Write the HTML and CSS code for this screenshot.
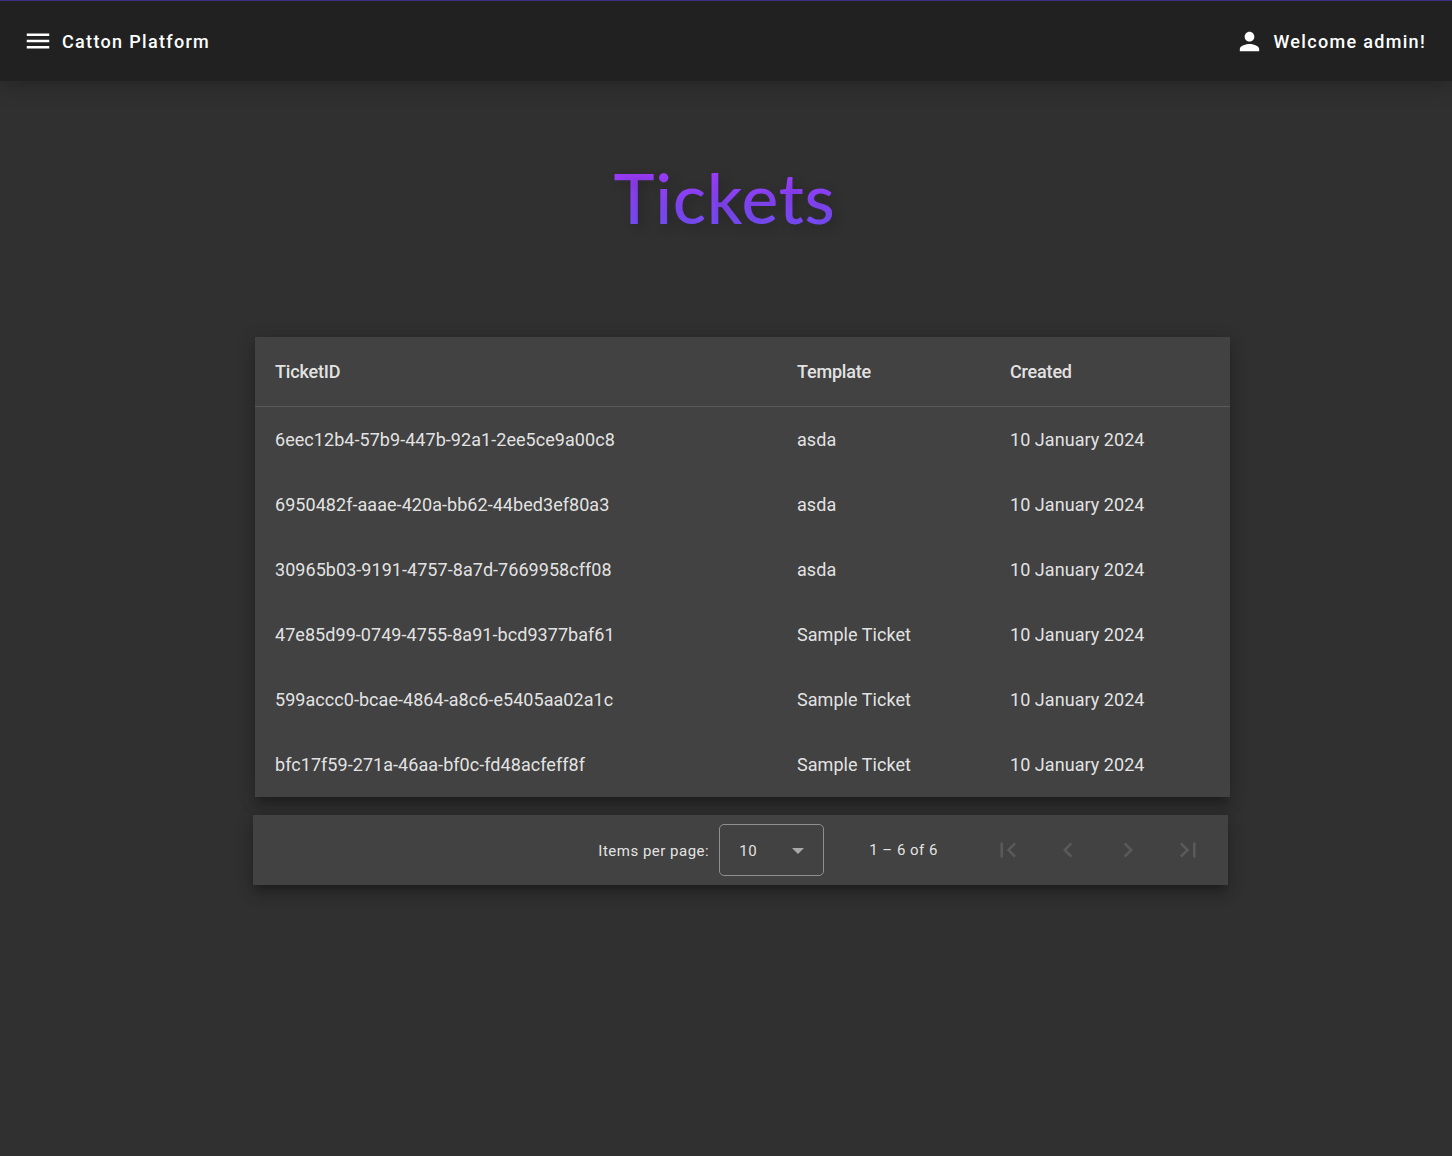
FILE: index.html
```html
<!DOCTYPE html>
<html lang="en">
<head>
<meta charset="utf-8">
<title>Catton Platform</title>
<link rel="stylesheet" href="styles.css">
</head>
<body>
<header class="toolbar">
  <div class="toolbar-group">
    <svg class="icon icon-toolbar" viewBox="0 0 24 24"><path d="M3 18h18v-2H3v2zm0-5h18v-2H3v2zm0-7v2h18V6H3z"/></svg>
    <span class="toolbar-text">Catton Platform</span>
  </div>
  <div class="toolbar-group">
    <svg class="icon icon-person" viewBox="0 0 24 24"><path d="M12 12c2.21 0 4-1.79 4-4s-1.79-4-4-4-4 1.79-4 4 1.79 4 4 4zm0 2c-2.67 0-8 1.34-8 4v2h16v-2c0-2.66-5.33-4-8-4z"/></svg>
    <span class="toolbar-text">Welcome admin!</span>
  </div>
</header>
<main class="page">
  <h1 class="title">Tickets</h1>
  <table class="tickets">
    <colgroup><col class="col-id"><col class="col-template"><col class="col-created"></colgroup>
    <thead>
      <tr><th>TicketID</th><th>Template</th><th>Created</th></tr>
    </thead>
    <tbody>
      <tr><td>6eec12b4-57b9-447b-92a1-2ee5ce9a00c8</td><td>asda</td><td>10 January 2024</td></tr>
      <tr><td>6950482f-aaae-420a-bb62-44bed3ef80a3</td><td>asda</td><td>10 January 2024</td></tr>
      <tr><td>30965b03-9191-4757-8a7d-7669958cff08</td><td>asda</td><td>10 January 2024</td></tr>
      <tr><td>47e85d99-0749-4755-8a91-bcd9377baf61</td><td>Sample Ticket</td><td>10 January 2024</td></tr>
      <tr><td>599accc0-bcae-4864-a8c6-e5405aa02a1c</td><td>Sample Ticket</td><td>10 January 2024</td></tr>
      <tr><td>bfc17f59-271a-46aa-bf0c-fd48acfeff8f</td><td>Sample Ticket</td><td>10 January 2024</td></tr>
    </tbody>
  </table>
  <div class="paginator">
    <span class="per-page">Items per page:</span>
    <div class="select"><span>10</span><svg class="arrow" viewBox="0 0 10 5"><path d="M0 0l5 5 5-5z"/></svg></div>
    <span class="range">1 – 6 of 6</span>
    <div class="pager">
      <span class="pager-button"><svg class="icon icon-page" viewBox="0 0 24 24"><path d="M18.41 16.59L13.82 12l4.59-4.59L17 6l-6 6 6 6zM6 6h2v12H6z"/></svg></span>
      <span class="pager-button"><svg class="icon icon-page" viewBox="0 0 24 24"><path d="M15.41 7.41L14 6l-6 6 6 6 1.41-1.41L10.83 12z"/></svg></span>
      <span class="pager-button"><svg class="icon icon-page" viewBox="0 0 24 24"><path d="M10 6L8.59 7.41 13.17 12l-4.58 4.59L10 18l6-6z"/></svg></span>
      <span class="pager-button"><svg class="icon icon-page" viewBox="0 0 24 24"><path d="M5.59 7.41L10.18 12l-4.59 4.59L7 18l6-6-6-6zM16 6h2v12h-2z"/></svg></span>
    </div>
  </div>
</main>
</body>
</html>
```
FILE: styles.css
```css
* {
  box-sizing: border-box;
}

body {
  margin: 0;
  min-height: 1156px;
  background: #303030;
  color: #fff;
  font-family: Roboto, sans-serif;
  font-size: 18px;
}

.icon {
  display: block;
  flex: none;
  fill: currentColor;
}

.toolbar {
  display: flex;
  align-items: center;
  justify-content: space-between;
  height: 81px;
  padding: 0 26px 0 23px;
  border-top: 1px solid #3b3082;
  background: #212121;
  box-shadow: 0 4px 20px rgba(0, 0, 0, 0.25);
  font-weight: 500;
  letter-spacing: 1.32px;
}

.toolbar-group {
  display: flex;
  align-items: center;
}

.toolbar-text {
  padding-top: 1px;
}

.icon-toolbar {
  width: 30px;
  height: 30px;
  margin-right: 9px;
}

.icon-person {
  width: 29px;
  height: 29px;
  margin-right: 9px;
}

.title {
  width: max-content;
  margin: 72px auto 0;
  padding-right: 3px;
  height: 88px;
  line-height: 88px;
  font-family: Lato, sans-serif;
  font-weight: 500;
  font-size: 69.5px;
  letter-spacing: 0.75px;
  background: linear-gradient(#ac35ff, #6f55ff);
  background-clip: text;
  -webkit-text-fill-color: transparent;
  text-shadow: 4px 4px 12px rgba(0, 0, 0, 0.2);
}

.tickets,
.paginator {
  width: 975px;
  background: #424242;
  box-shadow: 0 6.25px 6.25px -3.75px rgba(0, 0, 0, 0.2),
    0 10px 12.5px 1.25px rgba(0, 0, 0, 0.14),
    0 3.75px 17.5px 2.5px rgba(0, 0, 0, 0.12);
}

.tickets {
  margin: 96px 0 0 255px;
  table-layout: fixed;
  border-collapse: separate;
  border-spacing: 0;
}

.col-id {
  width: 522px;
}

.col-template {
  width: 213px;
}

.tickets th,
.tickets td {
  padding: 0 20px;
  text-align: left;
  color: rgba(255, 255, 255, 0.87);
}

.tickets th {
  height: 70px;
  border-bottom: 1px solid #5a5a5a;
  font-weight: 500;
  letter-spacing: -0.18px;
}

.tickets td {
  height: 65px;
  letter-spacing: 0.05px;
}

.paginator {
  display: flex;
  align-items: center;
  height: 70px;
  margin: 18px 0 0 253px;
  padding-right: 10px;
  justify-content: flex-end;
  color: rgba(255, 255, 255, 0.87);
  font-size: 15px;
  letter-spacing: 0.5px;
}

.per-page {
  padding-top: 2px;
}

.select {
  display: flex;
  align-items: center;
  justify-content: space-between;
  width: 105px;
  height: 52px;
  margin: 0 45px 0 10px;
  padding: 2px 19px 0;
  border: 1px solid #8f8f8f;
  border-radius: 5px;
}

.arrow {
  width: 12px;
  height: 6px;
  fill: #a9a9a9;
}

.range {
  margin-right: 40px;
}

.pager {
  display: flex;
}

.pager-button {
  display: flex;
  align-items: center;
  justify-content: center;
  width: 60px;
  height: 60px;
  color: #5a5a5a;
}

.icon-page {
  width: 30px;
  height: 30px;
}
```
